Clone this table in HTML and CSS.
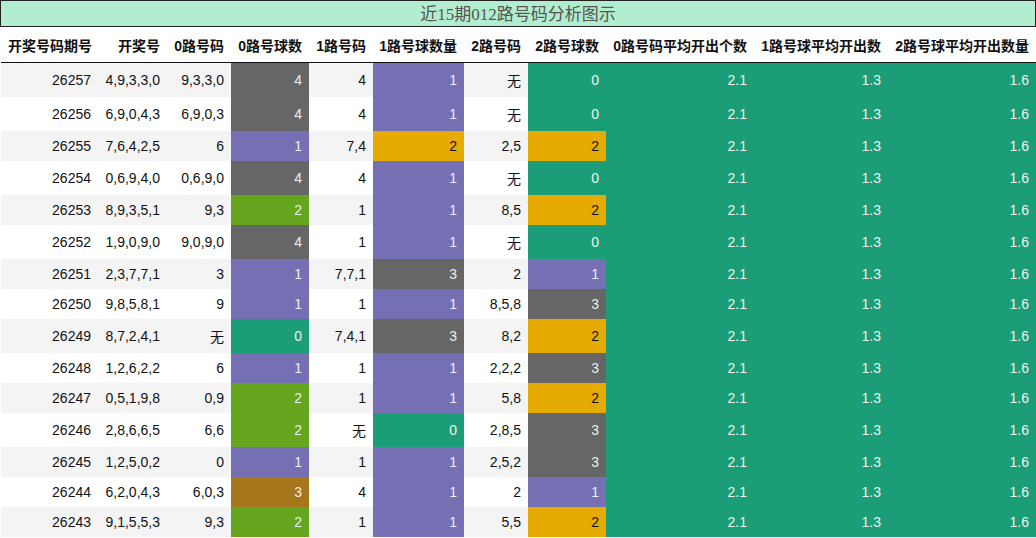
FILE: index.html
```html
<!DOCTYPE html>
<html lang="zh">
<head>
<meta charset="utf-8">
<title>近15期012路号码分析图示</title>
<link rel="stylesheet" href="styles.css">
</head>
<body>
<div class="title">近15期012路号码分析图示</div>
<table class="grid">
<colgroup>
<col class="c1"><col class="c2"><col class="c3"><col class="c4"><col class="c5"><col class="c6"><col class="c7"><col class="c8"><col class="c9"><col class="c10"><col class="c11">
</colgroup>
<thead>
<tr><th>开奖号码期号</th><th>开奖号</th><th>0路号码</th><th>0路号球数</th><th>1路号码</th><th>1路号球数量</th><th>2路号码</th><th>2路号球数</th><th>0路号码平均开出个数</th><th>1路号球平均开出数</th><th>2路号球平均开出数量</th></tr>
</thead>
<tbody>
<tr><td>26257</td><td>4,9,3,3,0</td><td>9,3,3,0</td><td class="k4">4</td><td>4</td><td class="k1">1</td><td>无</td><td class="k0">0</td><td class="k0">2.1</td><td class="k0">1.3</td><td class="k0">1.6</td></tr>
<tr><td>26256</td><td>6,9,0,4,3</td><td>6,9,0,3</td><td class="k4">4</td><td>4</td><td class="k1">1</td><td>无</td><td class="k0">0</td><td class="k0">2.1</td><td class="k0">1.3</td><td class="k0">1.6</td></tr>
<tr><td>26255</td><td>7,6,4,2,5</td><td>6</td><td class="k1">1</td><td>7,4</td><td class="ko">2</td><td>2,5</td><td class="ko">2</td><td class="k0">2.1</td><td class="k0">1.3</td><td class="k0">1.6</td></tr>
<tr><td>26254</td><td>0,6,9,4,0</td><td>0,6,9,0</td><td class="k4">4</td><td>4</td><td class="k1">1</td><td>无</td><td class="k0">0</td><td class="k0">2.1</td><td class="k0">1.3</td><td class="k0">1.6</td></tr>
<tr><td>26253</td><td>8,9,3,5,1</td><td>9,3</td><td class="k2">2</td><td>1</td><td class="k1">1</td><td>8,5</td><td class="ko">2</td><td class="k0">2.1</td><td class="k0">1.3</td><td class="k0">1.6</td></tr>
<tr><td>26252</td><td>1,9,0,9,0</td><td>9,0,9,0</td><td class="k4">4</td><td>1</td><td class="k1">1</td><td>无</td><td class="k0">0</td><td class="k0">2.1</td><td class="k0">1.3</td><td class="k0">1.6</td></tr>
<tr><td>26251</td><td>2,3,7,7,1</td><td>3</td><td class="k1">1</td><td>7,7,1</td><td class="k4">3</td><td>2</td><td class="k1">1</td><td class="k0">2.1</td><td class="k0">1.3</td><td class="k0">1.6</td></tr>
<tr><td>26250</td><td>9,8,5,8,1</td><td>9</td><td class="k1">1</td><td>1</td><td class="k1">1</td><td>8,5,8</td><td class="k4">3</td><td class="k0">2.1</td><td class="k0">1.3</td><td class="k0">1.6</td></tr>
<tr><td>26249</td><td>8,7,2,4,1</td><td>无</td><td class="k0">0</td><td>7,4,1</td><td class="k4">3</td><td>8,2</td><td class="ko">2</td><td class="k0">2.1</td><td class="k0">1.3</td><td class="k0">1.6</td></tr>
<tr><td>26248</td><td>1,2,6,2,2</td><td>6</td><td class="k1">1</td><td>1</td><td class="k1">1</td><td>2,2,2</td><td class="k4">3</td><td class="k0">2.1</td><td class="k0">1.3</td><td class="k0">1.6</td></tr>
<tr><td>26247</td><td>0,5,1,9,8</td><td>0,9</td><td class="k2">2</td><td>1</td><td class="k1">1</td><td>5,8</td><td class="ko">2</td><td class="k0">2.1</td><td class="k0">1.3</td><td class="k0">1.6</td></tr>
<tr><td>26246</td><td>2,8,6,6,5</td><td>6,6</td><td class="k2">2</td><td>无</td><td class="k0">0</td><td>2,8,5</td><td class="k4">3</td><td class="k0">2.1</td><td class="k0">1.3</td><td class="k0">1.6</td></tr>
<tr><td>26245</td><td>1,2,5,0,2</td><td>0</td><td class="k1">1</td><td>1</td><td class="k1">1</td><td>2,5,2</td><td class="k4">3</td><td class="k0">2.1</td><td class="k0">1.3</td><td class="k0">1.6</td></tr>
<tr><td>26244</td><td>6,2,0,4,3</td><td>6,0,3</td><td class="k3">3</td><td>4</td><td class="k1">1</td><td>2</td><td class="k1">1</td><td class="k0">2.1</td><td class="k0">1.3</td><td class="k0">1.6</td></tr>
<tr><td>26243</td><td>9,1,5,5,3</td><td>9,3</td><td class="k2">2</td><td>1</td><td class="k1">1</td><td>5,5</td><td class="ko">2</td><td class="k0">2.1</td><td class="k0">1.3</td><td class="k0">1.6</td></tr>
</tbody>
</table>
</body>
</html>
```
FILE: styles.css
```css
html, body {
  margin: 0;
  padding: 0;
  background: #fff;
}
body {
  font-family: "Liberation Sans", "Noto Sans CJK SC", sans-serif;
  font-size: 14px;
  color: #111;
}
.title {
  box-sizing: border-box;
  width: 1036px;
  height: 27px;
  padding-top: 2px;
  border: 1px solid #222;
  background: #b3edcf;
  color: #555;
  text-align: center;
  font-family: "Liberation Serif", "Noto Sans CJK SC", serif;
  font-size: 17px;
  line-height: 23px;
}
.grid {
  margin-left: 1px;
  width: 1035px;
  table-layout: fixed;
  border-collapse: collapse;
  border-spacing: 0;
}
.c1 { width: 97px; }
.c2 { width: 69px; }
.c3 { width: 64px; }
.c4 { width: 78px; }
.c5 { width: 64px; }
.c6 { width: 91px; }
.c7 { width: 64px; }
.c8 { width: 78px; }
.c9 { width: 148px; }
.c10 { width: 134px; }
.c11 { width: 148px; }
.grid th,
.grid td {
  padding: 7px 7px 7px 0;
  text-align: right;
  white-space: nowrap;
  line-height: normal;
}
.grid th {
  padding-top: 8px;
  font-weight: bold;
  color: #111;
  border-bottom: 1px solid #111;
}
.grid th:first-child {
  text-align: left;
  padding-left: 7px;
}
.grid tbody tr:nth-child(odd) td {
  background: #f4f4f4;
}
.grid tbody tr:nth-child(even) td {
  background: #fff;
}
.grid tbody tr td.k0 { background: #1b9e77; color: #eef2ef; }
.grid tbody tr td.k1 { background: #7570b3; color: #eeeef4; }
.grid tbody tr td.k2 { background: #66a61e; color: #eef2ea; }
.grid tbody tr td.k3 { background: #a6761d; color: #f2eee8; }
.grid tbody tr td.k4 { background: #666666; color: #eeeeee; }
.grid tbody tr td.ko { background: #e6ab02; color: #111; }
```
